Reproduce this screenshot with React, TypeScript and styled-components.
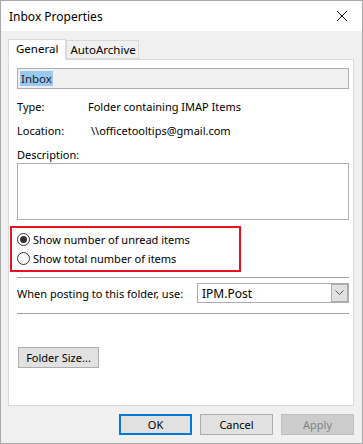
import styled, { createGlobalStyle } from 'styled-components';

const GlobalStyle = createGlobalStyle`
  html, body {
    margin: 0;
    padding: 0;
    background: #f0f0f0;
  }
  * {
    box-sizing: border-box;
  }
`;

const Window = styled.div`
  width: 363px;
  height: 444px;
  border: 1px solid #a9a9a9;
  background: #f0f0f0;
  font-family: 'Noto Sans', 'Open Sans', sans-serif;
  font-size: 11px;
  color: #000;
  display: flex;
  flex-direction: column;
`;

const TitleBar = styled.div`
  height: 30px;
  background: #fff;
  display: flex;
  align-items: center;
  justify-content: space-between;
  padding: 0 10px 0 8px;
  flex-shrink: 0;
`;

const Title = styled.span`
  font-size: 12px;
  margin-top: 1px;
`;

const CloseBtn = styled.div`
  width: 12px;
  height: 12px;
  display: flex;
  margin-right: 4px;
`;

const Body = styled.div`
  flex: 1;
  padding: 7px 8px 0 7px;
  display: flex;
  flex-direction: column;
`;

const TabRow = styled.div`
  display: flex;
  align-items: flex-end;
  height: 21px;
  position: relative;
  z-index: 1;
`;

const Tab = styled.div<{ $active?: boolean }>`
  height: ${(p) => (p.$active ? '21px' : '19px')};
  padding: ${(p) => (p.$active ? '0 7px 2px 7px' : '0 2px 0 3px')};
  border: 1px solid #d9d9d9;
  border-bottom: ${(p) => (p.$active ? '1px solid #fff' : '1px solid #d9d9d9')};
  background: ${(p) => (p.$active ? '#fff' : '#f0f0f0')};
  display: flex;
  align-items: center;
  margin-bottom: ${(p) => (p.$active ? '-1px' : '0')};
  font-size: 11.5px;
`;

const Panel = styled.div`
  height: 347px;
  border: 1px solid #d9d9d9;
  background: #fff;
  padding: 8px 4px 0 8px;
  display: flex;
  flex-direction: column;
`;

const NameField = styled.div`
  height: 21px;
  width: 332px;
  border: 1px solid #adadad;
  background: #f0f0f0;
  padding: 2px 2px;
  display: flex;
  align-items: center;
`;

const Selected = styled.span`
  background: #99c9ef;
  color: #1a1a2e;
  padding: 0 1px;
  line-height: 15px;
  font-size: 11.5px;
`;

const InfoRow = styled.div<{ $top: number }>`
  display: flex;
  margin-top: ${(p) => p.$top}px;
  line-height: 15px;
`;

const Label = styled.span`
  width: 71px;
  flex-shrink: 0;
`;

const Value = styled.span<{ $indent?: number }>`
  padding-left: ${(p) => p.$indent || 0}px;
`;

const DescBox = styled.div`
  width: 332px;
  height: 57px;
  border: 1px solid #adadad;
  margin-top: 1px;
`;

const Highlight = styled.div`
  width: 231px;
  margin: 6px 0 0 -7px;
  border: 2px solid #e81123;
  padding: 2px 0 2px 5px;
  display: flex;
  flex-direction: column;
`;

const RadioRow = styled.label`
  display: flex;
  align-items: center;
  height: 19px;
  gap: 3px;
`;

const RadioCircle = styled.span<{ $checked?: boolean }>`
  width: 13px;
  height: 13px;
  border-radius: 50%;
  border: 1px solid #333;
  background: #fff;
  display: flex;
  align-items: center;
  justify-content: center;

  &::after {
    content: '';
    width: 7px;
    height: 7px;
    border-radius: 50%;
    background: #333;
    display: ${(p) => (p.$checked ? 'block' : 'none')};
  }
`;

const Separator = styled.div<{ $top: number }>`
  width: 332px;
  height: 1px;
  background: #a0a0a0;
  margin-top: ${(p) => p.$top}px;
`;

const PostingRow = styled.div`
  display: flex;
  align-items: center;
  justify-content: space-between;
  width: 332px;
  margin-top: 5px;
  white-space: nowrap;
`;

const Combo = styled.div`
  width: 152px;
  height: 20px;
  border: 1px solid #adadad;
  display: flex;
  align-items: center;
  justify-content: space-between;
  padding: 0 0 0 4px;
  font-size: 12px;
`;

const ComboArrow = styled.div`
  width: 17px;
  height: 18px;
  background: #e1e1e1;
  border: 1px solid #adadad;
  display: flex;
  align-items: center;
  justify-content: center;
`;

const Button = styled.div<{ $primary?: boolean; $disabled?: boolean; $width?: number }>`
  width: ${(p) => p.$width || 73}px;
  height: 21px;
  display: flex;
  align-items: center;
  justify-content: center;
  background: ${(p) => (p.$disabled ? '#cccccc' : '#e1e1e1')};
  border: ${(p) => (p.$primary ? '2px solid #0078d7' : p.$disabled ? '1px solid #bfbfbf' : '1px solid #adadad')};
  color: ${(p) => (p.$disabled ? '#838383' : '#000')};
`;

const FolderSizeWrap = styled.div`
  margin-top: 33px;
  margin-left: 1px;
`;

const Footer = styled.div`
  display: flex;
  justify-content: flex-end;
  gap: 8px;
  margin-top: 8px;
`;

const App = () => {
  return (
    <>
      <GlobalStyle />
      <Window>
        <TitleBar>
          <Title>Inbox Properties</Title>
          <CloseBtn>
            <svg width="12" height="12" viewBox="0 0 12 12">
              <path d="M1 1 L11 11 M11 1 L1 11" stroke="#000" strokeWidth="1" fill="none" />
            </svg>
          </CloseBtn>
        </TitleBar>
        <Body>
          <TabRow>
            <Tab $active>General</Tab>
            <Tab>AutoArchive</Tab>
          </TabRow>
          <Panel>
            <NameField>
              <Selected>Inbox</Selected>
            </NameField>
            <InfoRow $top={10}>
              <Label>Type:</Label>
              <Value>Folder containing IMAP Items</Value>
            </InfoRow>
            <InfoRow $top={9}>
              <Label>Location:</Label>
              <Value $indent={3}>\\officetooltips@gmail.com</Value>
            </InfoRow>
            <InfoRow $top={9}>
              <Label>Description:</Label>
            </InfoRow>
            <DescBox />
            <Highlight>
              <RadioRow>
                <RadioCircle $checked />
                Show number of unread items
              </RadioRow>
              <RadioRow>
                <RadioCircle />
                Show total number of items
              </RadioRow>
            </Highlight>
            <Separator $top={5} />
            <PostingRow>
              <span>When posting to this folder, use:</span>
              <Combo>
                <span>IPM.Post</span>
                <ComboArrow>
                  <svg width="9" height="6" viewBox="0 0 9 6">
                    <path d="M0.5 0.5 L4.5 4.5 L8.5 0.5" stroke="#555" strokeWidth="1" fill="none" />
                  </svg>
                </ComboArrow>
              </Combo>
            </PostingRow>
            <Separator $top={10} />
            <FolderSizeWrap>
              <Button $width={81}>Folder Size...</Button>
            </FolderSizeWrap>
          </Panel>
          <Footer>
            <Button $primary>OK</Button>
            <Button>Cancel</Button>
            <Button $disabled>Apply</Button>
          </Footer>
        </Body>
      </Window>
    </>
  );
};

export default App;
